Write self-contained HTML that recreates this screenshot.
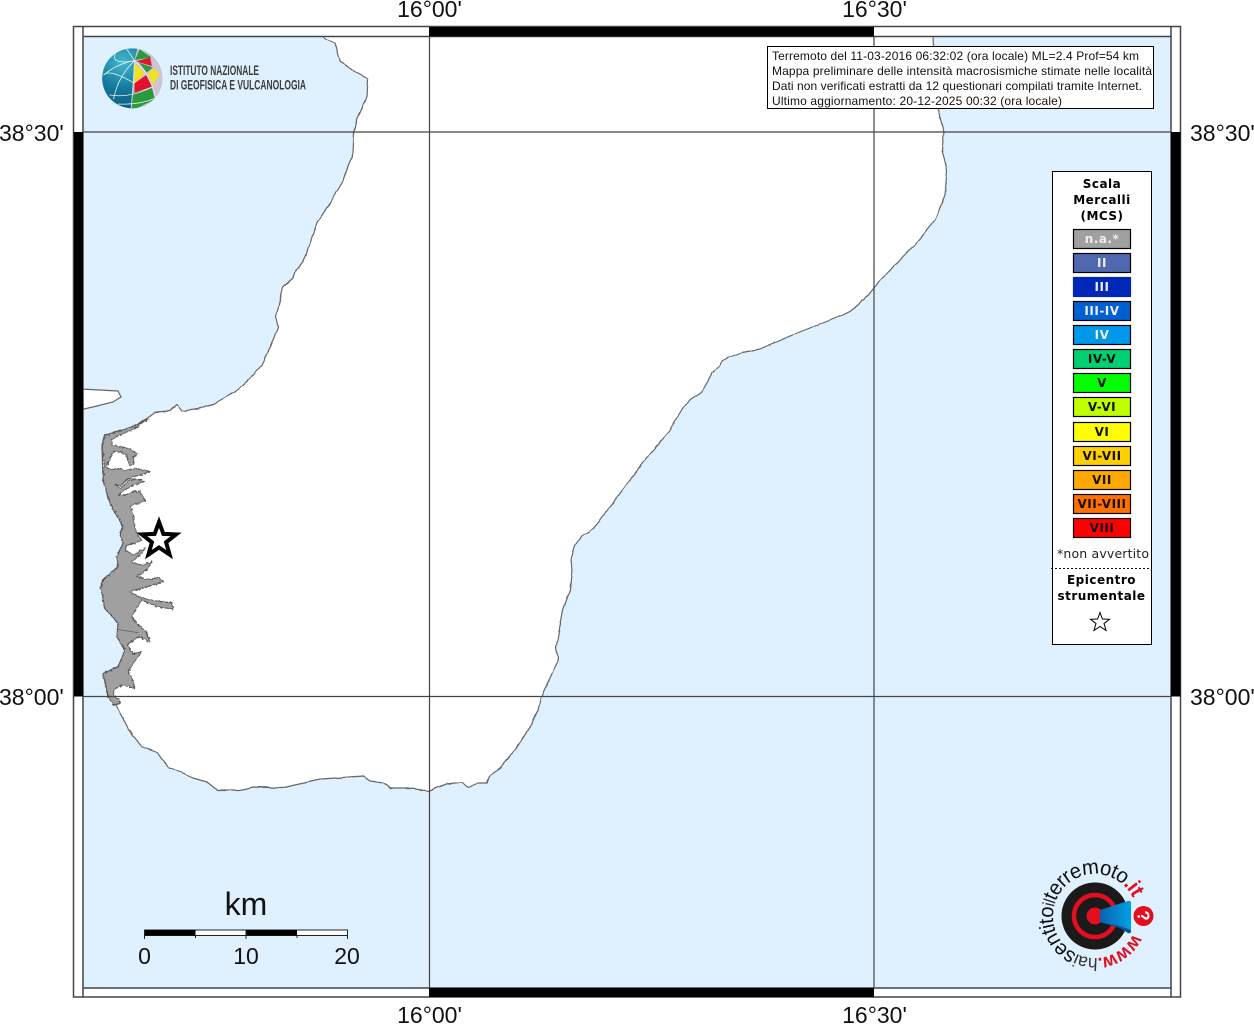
<!DOCTYPE html>
<html><head><meta charset="utf-8"><style>
html,body{margin:0;padding:0;background:#fff;width:1254px;height:1024px;overflow:hidden}
svg{display:block}
text{font-family:"Liberation Sans",sans-serif}
.lab{font-size:23px;fill:#111}
.d{font-family:"DejaVu Sans",sans-serif;font-size:12px;font-weight:bold;text-anchor:middle;letter-spacing:.5px}
.i{font-size:12px;fill:#111}
</style></head><body>
<svg width="1254" height="1024" viewBox="0 0 1254 1024" xmlns="http://www.w3.org/2000/svg">
<defs>
<clipPath id="map"><rect x="83" y="37" width="1088" height="951"/></clipPath>
<clipPath id="gl"><circle cx="128" cy="115" r="90"/></clipPath>
<radialGradient id="gb" cx="35%" cy="25%" r="85%"><stop offset="0" stop-color="#45b8cc"/><stop offset=".5" stop-color="#12789c"/><stop offset="1" stop-color="#0b5478"/></radialGradient>
<linearGradient id="mg" x1="0" y1="0" x2="1" y2="0"><stop offset="0" stop-color="#0a62b0"/><stop offset="1" stop-color="#00a0e4"/></linearGradient>
<filter id="wig" x="-5%" y="-5%" width="110%" height="110%"><feTurbulence type="fractalNoise" baseFrequency=".09" numOctaves="2" seed="4"/><feDisplacementMap in="SourceGraphic" scale="2.5" xChannelSelector="R" yChannelSelector="G"/></filter>
<filter id="wig2" x="-10%" y="-10%" width="120%" height="120%"><feTurbulence type="fractalNoise" baseFrequency=".14" numOctaves="2" seed="7"/><feDisplacementMap in="SourceGraphic" scale="11" xChannelSelector="R" yChannelSelector="G"/></filter>
</defs>
<rect x="83" y="37" width="1088" height="951" fill="#dff1fe"/>
<g clip-path="url(#map)">
<path filter="url(#wig)" d="M322 30L322 36L326 39L335 43L340 60L352 70L368 79L367 97L357 118L354 132L353 153L342 183L330 203L317 222L307 253L303 262L295 272L293 278L283 287L280 300L276 317L278 328L267 353L262 365L250 378L235 392L215 403L198 409L183 411L177 405L170 411L155 412L147 418L137 425L123 430L105 435L102 447L103 480L110 503L123 527L120 533L123 543L117 557L118 567L103 580L101 587L105 608L118 623L117 637L125 650L118 667L103 673L108 697L113 700L128 728L135 738L142 747L158 753L168 767L193 778L207 782L217 790L243 790L255 787L282 788L322 779L363 776L370 781L383 783L390 788L408 788L428 791L447 784L463 782L468 787L477 783L487 783L490 775L500 768L517 747L530 727L538 710L541 697L557 663L558 658L556 648L563 610L570 590L572 570L571 560L575 545L583 535L588 533L595 527L630 480L653 450L668 433L685 405L690 400L702 392L712 373L720 365L723 360L740 353L760 349L797 333L823 323L843 315L852 310L868 295L880 280L895 265L915 245L935 220L945 195L947 170L942 150L944 132L938 110L934 80L933 30Z" fill="#fff" stroke="#666" stroke-width="1.2" stroke-linejoin="round"/>
<path d="M80 389L118 391L121 397L113 402L97 406L80 410Z" fill="#fff" stroke="#666" stroke-width="1.2"/>
<g transform="translate(70 380) scale(.33333)">
<path filter="url(#wig2)" d="M235 118L215 125L205 140L185 150L150 165L125 180L125 195L150 200L175 205L205 222L190 232L192 255L178 255L170 225L150 215L130 215L118 240L108 262L120 268L150 265L165 270L205 265L240 275L215 285L190 290L170 300L150 318L135 312L150 325L180 300L215 298L222 305L190 315L165 330L145 345L165 345L190 335L210 335L225 362L205 370L180 378L190 400L192 430L200 460L215 480L195 490L170 495L165 510L190 525L225 505L210 525L185 545L200 552L220 555L245 545L230 570L200 590L240 598L265 592L280 605L240 618L180 635L205 650L240 660L305 668L310 688L262 680L215 660L198 688L185 710L200 730L228 755L240 785L205 770L172 795L190 822L215 815L190 850L175 875L190 905L195 925L160 915L135 925L130 945L148 958L150 970L130 975L115 950L100 880L145 860L165 810L140 770L145 730L105 685L92 620L100 600L145 560L140 530L160 490L150 460L160 440L120 370L100 300L103 260L97 200L105 165L160 150L200 135Z" fill="#a0a0a0" stroke="#555" stroke-width="3" stroke-linejoin="round"/>
<path d="M140 748L205 758" fill="none" stroke="#555" stroke-width="2"/>
</g>
</g>
<!-- frame -->
<rect x="73.5" y="26.5" width="1107" height="970.5" fill="none" stroke="#444" stroke-width="1.5"/>
<rect x="83" y="36.5" width="1088" height="951.5" fill="none" stroke="#444" stroke-width="1.5"/>
<path d="M83 27V36M1171 27V36M83 988V997M1171 988V997" stroke="#444" stroke-width="1.5"/>
<rect x="429" y="27" width="445" height="9.5" fill="#000"/>
<rect x="429" y="988" width="445" height="9" fill="#000"/>
<rect x="74" y="132" width="9" height="564.5" fill="#000"/>
<rect x="1171" y="132" width="9.5" height="564.5" fill="#000"/>
<path d="M429.5 36V988M874 36V988M83 132H1171M83 696.5H1171" stroke="#444" stroke-width="1.2" fill="none"/>
<!-- labels -->
<text class="lab" x="429.5" y="17" text-anchor="middle">16°00'</text>
<text class="lab" x="874.5" y="17" text-anchor="middle">16°30'</text>
<text class="lab" x="429.5" y="1023" text-anchor="middle">16°00'</text>
<text class="lab" x="874.5" y="1023" text-anchor="middle">16°30'</text>
<text class="lab" x="-1" y="141">38°30'</text>
<text class="lab" x="-1" y="705">38°00'</text>
<text class="lab" x="1190" y="141">38°30'</text>
<text class="lab" x="1190" y="705">38°00'</text>
<!-- info -->
<rect x="767.5" y="46.5" width="386" height="62" fill="#fff" stroke="#000" stroke-width="1"/>
<text class="i" x="772" y="60" textLength="367">Terremoto del 11-03-2016 06:32:02 (ora locale) ML=2.4 Prof=54 km</text>
<text class="i" x="772" y="75" textLength="380">Mappa preliminare delle intensità macrosismiche stimate nelle località</text>
<text class="i" x="772" y="90" textLength="370">Dati non verificati estratti da 12 questionari compilati tramite Internet.</text>
<text class="i" x="772" y="105" textLength="290">Ultimo aggiornamento: 20-12-2025 00:32 (ora locale)</text>
<!-- legend -->
<rect x="1052.5" y="171.5" width="99" height="473" fill="#fff" stroke="#000" stroke-width="1"/>
<text class="d" x="1102" y="188">Scala</text>
<text class="d" x="1102" y="204">Mercalli</text>
<text class="d" x="1102" y="220">(MCS)</text>
<g stroke="#000" stroke-width="1.2">
<rect x="1073.5" y="229.5" width="57" height="19" fill="#a0a0a0"/>
<rect x="1073.5" y="253.5" width="57" height="19" fill="#5068b0"/>
<rect x="1073.5" y="277.5" width="57" height="19" fill="#0028b8" stroke="#0028b8"/>
<rect x="1073.5" y="301.5" width="57" height="19" fill="#0060d0"/>
<rect x="1073.5" y="325.5" width="57" height="19" fill="#0098e8"/>
<rect x="1073.5" y="349.5" width="57" height="19" fill="#00d070"/>
<rect x="1073.5" y="373.5" width="57" height="19" fill="#00ff00"/>
<rect x="1073.5" y="397.5" width="57" height="19" fill="#c0ff00"/>
<rect x="1073.5" y="422.5" width="57" height="19" fill="#ffff00"/>
<rect x="1073.5" y="446.5" width="57" height="19" fill="#ffd000"/>
<rect x="1073.5" y="470.5" width="57" height="19" fill="#ffa800"/>
<rect x="1073.5" y="494.5" width="57" height="19" fill="#ff7000"/>
<rect x="1073.5" y="518.5" width="57" height="19" fill="#ff0000"/>
</g>
<g>
<text class="d" x="1102" y="243" fill="#eee">n.a.*</text>
<text class="d" x="1102" y="267" fill="#eee">II</text>
<text class="d" x="1102" y="291" fill="#eee">III</text>
<text class="d" x="1102" y="315" fill="#eee">III-IV</text>
<text class="d" x="1102" y="339" fill="#eee">IV</text>
<text class="d" x="1102" y="363" fill="#111">IV-V</text>
<text class="d" x="1102" y="387" fill="#111">V</text>
<text class="d" x="1102" y="411" fill="#111">V-VI</text>
<text class="d" x="1102" y="436" fill="#111">VI</text>
<text class="d" x="1102" y="460" fill="#111">VI-VII</text>
<text class="d" x="1102" y="484" fill="#111">VII</text>
<text class="d" x="1102" y="508" fill="#111">VII-VIII</text>
<text class="d" x="1102" y="532" fill="#111">VIII</text>
</g>
<text x="1103" y="558" text-anchor="middle" style="font-family:'DejaVu Sans',sans-serif;font-size:12.5px;fill:#222" textLength="92">*non avvertito</text>
<path d="M1051 568.5H1150" stroke="#111" stroke-width="1" stroke-dasharray="2 2"/>
<text class="d" x="1101.5" y="584">Epicentro</text>
<text class="d" x="1101.5" y="600">strumentale</text>
<polygon points="1100,612.5 1102.4,619 1109.5,619.3 1104,623.5 1106,630.5 1100,626.5 1094,630.5 1096,623.5 1090.5,619.3 1097.6,619" fill="#fff" stroke="#000" stroke-width="1"/>
<!-- big star -->
<polygon points="159,522 163.4,533.9 176.1,534.4 166.1,542.3 169.6,554.6 159,547.5 148.4,554.6 151.9,542.3 141.9,534.4 154.6,533.9" fill="#fff" stroke="#000" stroke-width="4" stroke-miterlimit="10"/>
<!-- scale -->
<rect x="144.5" y="930" width="203" height="5.5" fill="#fff" stroke="#222" stroke-width="1"/>
<rect x="144.5" y="930" width="51" height="5.5" fill="#000"/>
<rect x="246" y="930" width="51" height="5.5" fill="#000"/>
<path d="M144.5 930V939M246 930V939M347.5 930V939M195.5 935V938M297 935V938" stroke="#222" stroke-width="1"/>
<text x="246" y="915" text-anchor="middle" style="font-size:32px;fill:#111">km</text>
<text class="lab" x="144.5" y="964" text-anchor="middle">0</text>
<text class="lab" x="246" y="964" text-anchor="middle">10</text>
<text class="lab" x="347" y="964" text-anchor="middle">20</text>
<!-- INGV logo -->
<g transform="translate(89.5 40) scale(.33333)">
<g clip-path="url(#gl)">
<rect x="30" y="20" width="200" height="190" fill="url(#gb)"/>
<polygon points="135,62 145,20 230,20 230,210 128,210" fill="#cfc4d2"/>
<polygon points="137,60 150,28 186,52" fill="#2a9a3c"/>
<polygon points="140,64 182,52 187,78" fill="#e2122c"/>
<polygon points="135,68 165,100 135,130" fill="#f2e21c"/>
<polygon points="148,68 190,82 172,98" fill="#2a9a3c"/>
<polygon points="176,102 194,85 210,102 190,135" fill="#f2e21c"/>
<polygon points="135,130 170,105 188,140 135,158" fill="#e2122c"/>
<polygon points="128,160 188,144 196,178 128,212" fill="#2a9a3c"/>
<g fill="none" stroke="#e6f2f4" stroke-width="2.4">
<path d="M135 62Q132 130 125 205M135 62Q85 110 72 178M135 62Q85 70 42 105M135 62L110 25M135 62Q180 95 200 180"/>
<path d="M78 40Q62 75 135 62M42 105Q60 85 135 130M60 165Q125 175 190 140M85 192Q150 195 195 175"/>
</g>
</g>
</g>
<text x="170" y="75" textLength="89" lengthAdjust="spacingAndGlyphs" style="font-size:13.5px;fill:#3d3d3d;font-weight:bold">ISTITUTO NAZIONALE</text>
<text x="170" y="89.5" textLength="136" lengthAdjust="spacingAndGlyphs" style="font-size:13.5px;fill:#3d3d3d;font-weight:bold">DI GEOFISICA E VULCANOLOGIA</text>
<!-- haisentito logo -->
<circle cx="1095" cy="916" r="33.5" fill="#1a1a1a"/>
<circle cx="1095" cy="916" r="21" fill="none" stroke="#e30f20" stroke-width="4.5"/>
<circle cx="1095" cy="916" r="8.5" fill="#e30f20"/>
<path d="M1100 910L1128 901Q1131 900 1131 903V931Q1131 934 1128 933L1120 928L1100 922Z" fill="url(#mg)"/>
<path d="M1100 922L1120 926L1131 930Q1131 934 1128 933L1120 928Z" fill="#0a4f96"/>
<circle cx="1143.5" cy="916" r="10" fill="#e30f20"/>
<text x="1143.5" y="922" text-anchor="middle" transform="rotate(80 1143.5 916)" style="font-size:17px;font-weight:bold;fill:#fff">?</text>
<path id="ring" d="M1133.1 933.7A42 42 0 1 1 1132.4 896.9" fill="none"/>
<text style="font-size:21px;letter-spacing:-.6px"><textPath href="#ring" textLength="226" lengthAdjust="spacingAndGlyphs"><tspan fill="#e30f20" font-weight="bold" font-size="19">www.</tspan><tspan fill="#333" font-size="18">hai</tspan><tspan fill="#111">sentito</tspan><tspan fill="#333" font-size="17">il</tspan><tspan fill="#111">terremoto</tspan><tspan fill="#e30f20" font-weight="bold">.it</tspan></textPath></text>
</svg>
</body></html>
